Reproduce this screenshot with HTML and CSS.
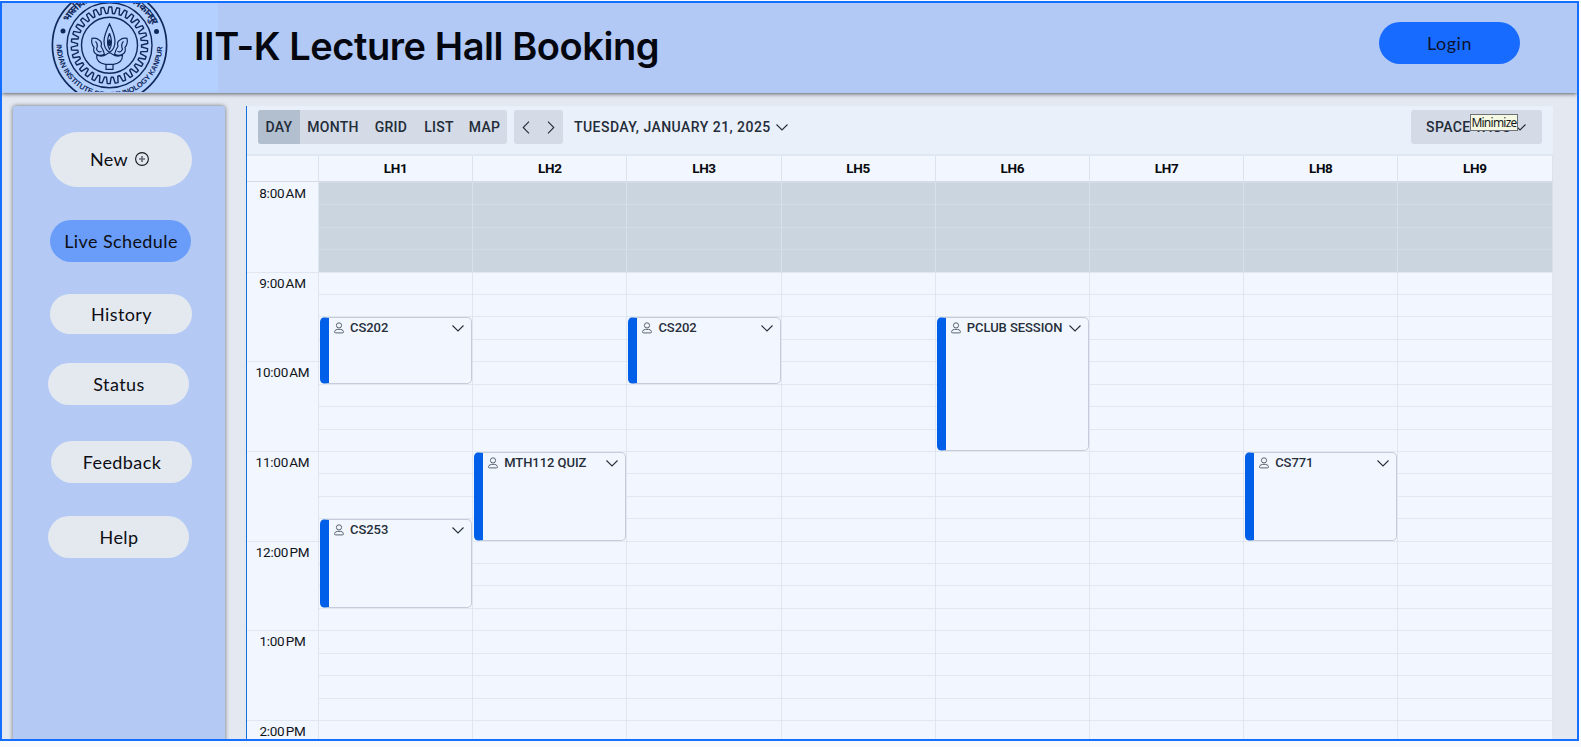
FILE: index.html
```html
<!DOCTYPE html>
<html lang="en">
<head>
<meta charset="utf-8">
<title>IIT-K Lecture Hall Booking</title>
<link rel="stylesheet" href="styles.css">
</head>
<body>
<svg width="0" height="0" class="defs">
  <symbol id="down" viewBox="0 0 12 7"><path d="M.5 .5 6 6 11.5 .5" fill="none" stroke="currentColor" stroke-width="1.1"/></symbol>
  <symbol id="user" viewBox="0 0 10 12"><circle cx="5" cy="3.4" r="2.6" fill="none" stroke="currentColor"/><path d="M1.6 10.9Q.3 10.9.6 9.6 1.1 7.4 3.4 7.4H6.600Q8.900 7.400 9.400 9.600 9.700 10.900 8.400 10.900Z" fill="none" stroke="currentColor"/></symbol>
</svg>
<div class="app">
  <header class="header">
    <div class="brand">
      <svg class="logo" width="216" height="89" viewBox="2 3 216 89">
        <g transform="translate(109.500 45.300)" fill="none" stroke="#10295c">
          <circle r="57.100" stroke-width="1.700"/>
          <circle r="42.500" stroke-width="1.400"/>
          <path id="gear" stroke-width="1.400" stroke-linejoin="round"/>
          <circle r="28" stroke-width="1.400"/>
          <path stroke-width="1.200" d="M0-21.500C-3.500-14-5.500-9-5.500-4Q-5.500 4 0 7 5.500 4 5.500-4C5.500-9 3.500-14 0-21.500ZM0-12Q-4-2 0 4 4-2 0-12M-5 9C-13 12-17 7-15.500 2-18-1-18-5-17.500-7Q-13-8-10-5-7-3-8.500 1-6 5-5 9M5 9C13 12 17 7 15.500 2 18-1 18-5 17.500-7Q13-8 10-5 7-3 8.500 1 6 5 5 9M-14-4Q-11-1-13 4-11 8-8 6M14-4Q11-1 13 4 11 8 8 6M-13 10Q-13 18-4 19H4Q13 18 13 10Q7 12 3 9 0 6-3 9-7 12-13 10M-3.500 19V24H3.500V19"/>
          <ellipse cy="-2.500" rx="1.700" ry="3.500" fill="#10295c" stroke="none"/>
          <g fill="#10295c" stroke="none">
            <circle cx="-46.500" cy="-14.400" r="2.500"/><circle cx="47" cy="-13.800" r="2.500"/>
            <path id="arcBottom" d="M-53 -1A53 53 0 0 0 53 -1" fill="none"/>
            <path id="arcTop" d="M-42.700 -20.500A47.300 47.300 0 0 1 42.700 -20.500" fill="none"/>
            <text class="seal"><textPath href="#arcBottom" textLength="164">INDIAN INSTITUTE OF TECHNOLOGY KANPUR</textPath></text>
            <text class="seal-hi"><textPath href="#arcTop" startOffset="1" textLength="104">भारतीय प्रौद्योगिकी संस्थान कानपुर</textPath></text>
          </g>
        </g>
      </svg>
    </div>
    <h1 class="title">IIT-K Lecture Hall Booking</h1>
    <button class="login">Login</button>
  </header>

  <div class="body">
    <nav class="sidebar">
      <a class="pill new">New
        <svg width="14" height="14" viewBox="0 0 14 14"><circle cx="7" cy="7" r="6.400" fill="none" stroke="#14161c" stroke-width="1.100"/><path d="M7 4V10M4 7H10" stroke="#666b75" stroke-width="1.700"/></svg>
      </a>
      <a class="pill live">Live Schedule</a>
      <a class="pill history">History</a>
      <a class="pill status">Status</a>
      <a class="pill feedback">Feedback</a>
      <a class="pill help">Help</a>
    </nav>

    <main class="calendar">
      <div class="toolbar">
        <div class="group views">
          <span class="view on v-day">DAY</span><span class="view v-month">MONTH</span><span class="view v-grid">GRID</span><span class="view v-list">LIST</span><span class="view v-map">MAP</span>
        </div>
        <div class="group arrows">
          <svg width="8" height="13" viewBox="0 0 8 13"><path d="M7 .7 1.200 6.500 7 12.300" fill="none" stroke="currentColor" stroke-width="1.100"/></svg>
          <svg width="8" height="13" viewBox="0 0 8 13"><path d="M1 .7 6.800 6.500 1 12.300" fill="none" stroke="currentColor" stroke-width="1.100"/></svg>
        </div>
        <div class="date"><span class="date-text">TUESDAY, JANUARY 21, 2025</span><svg width="12" height="7"><use href="#down"/></svg></div>
        <div class="group tags"><span>SPACE TAGS</span><svg width="12" height="7"><use href="#down"/></svg><div class="tooltip">Minimize</div></div>
      </div>
      <div class="halls">
        <span></span><span>LH1</span><span>LH2</span><span>LH3</span><span>LH5</span><span>LH6</span><span>LH7</span><span>LH8</span><span>LH9</span>
      </div>
      <div class="schedule">
        <div class="times">
          <span>8:00 AM</span><span>9:00 AM</span><span>10:00 AM</span><span>11:00 AM</span><span>12:00 PM</span><span>1:00 PM</span><span>2:00 PM</span>
        </div>
        <div class="slots">
          <div class="closed"></div>
          <div class="columns"><i></i><i></i><i></i><i></i><i></i><i></i><i></i><i></i></div>
          <div class="event lh1 e-cs202"><svg class="user" width="10" height="12"><use href="#user"/></svg><b>CS202</b><svg class="more" width="12" height="7"><use href="#down"/></svg></div>
          <div class="event lh1 e-cs253"><svg class="user" width="10" height="12"><use href="#user"/></svg><b>CS253</b><svg class="more" width="12" height="7"><use href="#down"/></svg></div>
          <div class="event lh2 e-quiz"><svg class="user" width="10" height="12"><use href="#user"/></svg><b>MTH112 QUIZ</b><svg class="more" width="12" height="7"><use href="#down"/></svg></div>
          <div class="event lh3 e-cs202"><svg class="user" width="10" height="12"><use href="#user"/></svg><b>CS202</b><svg class="more" width="12" height="7"><use href="#down"/></svg></div>
          <div class="event lh6 e-pclub"><svg class="user" width="10" height="12"><use href="#user"/></svg><b>PCLUB SESSION</b><svg class="more" width="12" height="7"><use href="#down"/></svg></div>
          <div class="event lh8 e-quiz"><svg class="user" width="10" height="12"><use href="#user"/></svg><b>CS771</b><svg class="more" width="12" height="7"><use href="#down"/></svg></div>
        </div>
      </div>
    </main>
  </div>
</div>
<script src="gear.js"></script>
</body>
</html>
```

FILE: styles.css
```css
* { box-sizing: border-box; }
html, body { margin: 0; height: 100%; overflow: hidden; }
body { background: #f9fafb; padding-top: 1px; font-family: Lato, "Open Sans", sans-serif; }
.defs { position: absolute; }
.app {
  width: 1579px; height: 740px; border: 2px solid #146eff; background: #e3e8f1;
  overflow: hidden; display: flex; flex-direction: column;
}

/* header */
.header {
  height: 90px; flex: none; display: flex; background: #b2c9f5;
  box-shadow: 0 1px 4px rgba(0,0,0,.6); position: relative; z-index: 1;
}
.brand { width: 216px; height: 89px; background: #b4d0ff; overflow: hidden; }
.logo { display: block; }
.seal { font: bold 7.500px "Liberation Sans", sans-serif; }
.seal-hi { font: bold 10px "Noto Sans", "Noto Sans Devanagari", sans-serif; }
.title {
  margin: 0 0 0 -24px; width: 500px; white-space: nowrap; color: #04070f;
  font: 600 38px/87px Inter, sans-serif; letter-spacing: -.44px;
}
.login {
  margin: 19px 57px 0 auto; width: 141px; height: 42px; border: 0; border-radius: 21px;
  background: #186bff; color: #0b1330; font: 18px/42px Lato, sans-serif; padding: 0 0 1px; letter-spacing: .5px;
}

/* layout */
.body { flex: 1; min-height: 0; display: flex; gap: 21px; padding: 13px 0 0 11px; }
.sidebar {
  width: 212px; height: 660px; background: #b4caf5; box-shadow: 0 0 4px rgba(0,0,0,.55); border-radius: 3px;
  padding: 26px 0 0 35px; display: flex; flex-direction: column; align-items: flex-start;
}
.pill {
  display: flex; align-items: center; justify-content: center; gap: 7px; flex: none;
  width: 141px; height: 42px; border-radius: 21px; background: #e4e9f0; color: #0c0e14;
  font-size: 18px; letter-spacing: .4px; padding: 0 0 0 1px; margin-left: 2px;
}
.pill.new { width: 142px; height: 55px; border-radius: 28px; padding: 0 3px 1px 0; }
.pill.live { margin-top: 33px; background: #6a9df9; }
.pill.history { margin-top: 32px; width: 142px; height: 40px; }
.pill.status { margin-top: 29px; margin-left: 0; }
.pill.feedback { margin-top: 36px; margin-left: 3px; }
.pill.help { margin-top: 33px; margin-left: 0; }

/* calendar */
.calendar { width: 1307px; height: 660px; border-left: 1px solid #1473da; background: #f2f7ff; font-family: Roboto, sans-serif; }
.toolbar { height: 50px; background: #eaf0f9; border-bottom: 2px solid #e1e7f0; padding: 4px 11px 0 11px; display: flex; color: #232c39; font-size: 14px; font-weight: 500; }
.group { height: 34px; border-radius: 3px; background: #d4dbe6; display: flex; align-items: center; }
.views { width: 249px; overflow: hidden; }
.view { line-height: 35px; text-align: center; white-space: nowrap; letter-spacing: .25px; }
.on { background: #b2bfce; }
.v-day { width: 42px; } .v-month { width: 66px; } .v-grid { width: 50px; } .v-list { width: 46px; } .v-map { width: 45px; }
.arrows { width: 49px; margin-left: 7px; justify-content: space-between; padding: 0 8px; }
.date { margin-left: 11px; display: flex; align-items: center; height: 34px; gap: 5px; }
.date-text { width: 197px; white-space: nowrap; letter-spacing: .46px; }
.tags { width: 131px; margin-left: auto; padding: 0 16px 0 15px; justify-content: space-between; position: relative; letter-spacing: .4px; }
.tooltip {
  position: absolute; left: 59px; top: 4px; width: 48px; height: 17px; border: 1px solid #6e7278; background: #f5f8e3;
  color: #15181d; font: 12px/16px "Noto Sans", sans-serif; letter-spacing: -.75px; text-align: center; white-space: nowrap;
}
.halls { height: 26px; display: grid; grid-template-columns: 72px repeat(8, 154.200px); border-bottom: 1px solid #d5dce6; }
.halls span { border-right: 1px solid #dce3ee; text-align: center; font: 700 13.500px/25px Roboto, sans-serif; letter-spacing: -.3px; color: #07090d; }
.schedule { display: flex; }
.times {
  width: 72px; flex: none; border-right: 1px solid #dfe6f0; display: grid; grid-template-rows: repeat(7, 89.660px);
  justify-items: stretch; text-align: center; color: #111419; font-size: 13.500px; letter-spacing: -.25px;
}
.times span { padding-top: 1px; line-height: 18px; word-spacing: -1.800px; border-top: 1px solid #e1e7f1; }
.times span:first-child { border-color: transparent; }
.slots {
  position: relative; display: grid; grid-template-columns: repeat(8, 154.200px); grid-template-rows: repeat(26, 22.415px);
  background: repeating-linear-gradient(#e2e8f2 0 1px, #f2f7ff 1px 22.415px);
}
.closed { grid-area: 1 / 1 / 5 / 9; background: repeating-linear-gradient(#d2dbe6 0 1px, #cbd5e0 1px 22.415px); }
.columns { grid-area: 1 / 1 / 27 / 9; display: grid; grid-template-columns: repeat(8, 154.200px); }
.columns i { border-right: 1px solid rgba(217,225,237,.75); }
.event {
  margin: 1px 1px 0 1px; border: 1px solid #c5cbd8; border-left: 9px solid #005fe8; border-radius: 5px;
  background: #f2f7ff; color: #262e3a; display: flex; align-items: flex-start; padding: 4px 7px 0 5px; z-index: 1;
}
.event b { font-weight: 500; font-size: 13px; line-height: 12px; margin-left: 6px; letter-spacing: -.05px; white-space: nowrap; }
.event .user { flex: none; color: #5b6370; }
.event .more { flex: none; margin: 3px 0 0 auto; }
.lh1 { grid-column: 1; } .lh2 { grid-column: 2; } .lh3 { grid-column: 3; } .lh6 { grid-column: 5; } .lh8 { grid-column: 7; }
.e-cs202 { grid-row: 7 / 10; }
.e-cs253 { grid-row: 16 / 20; }
.e-quiz { grid-row: 13 / 17; }
.e-pclub { grid-row: 7 / 13; }
```

FILE: gear.js
```javascript
// Outline of the toothed ring in the crest.
const teeth = 30;
let d = "";
for (let i = 0; i < teeth; i++) {
  const step = (2 * Math.PI) / teeth;
  [[0, 32], [0.25, 32], [0.42, 38.3], [0.78, 38.3], [0.95, 32]].forEach(([t, r]) => {
    const a = (i + t) * step;
    d += (d ? "L" : "M") + (r * Math.cos(a)).toFixed(2) + " " + (r * Math.sin(a)).toFixed(2);
  });
}
document.getElementById("gear").setAttribute("d", d + "Z");
```
